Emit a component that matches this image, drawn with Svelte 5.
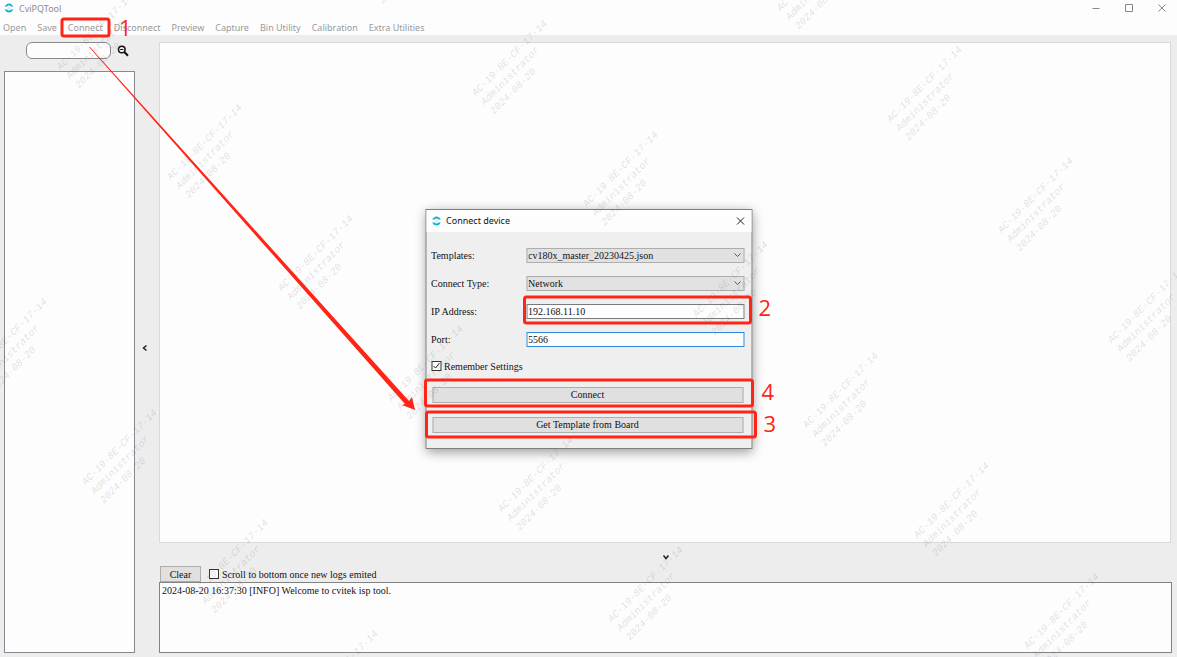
<script>
  const menu = ['Open', 'Save', 'Connect', 'Disconnect', 'Preview', 'Capture', 'Bin Utility', 'Calibration', 'Extra Utilities'];

  // Start points of the repeated security stamps, along four diagonals.
  const stamps = [
    [-26, 373], [84, 484], [195, 594], [305, 705],
    [59, 69], [169, 179], [280, 290], [390, 400], [500, 511], [610, 621],
    [363, -16], [474, 95], [585, 206], [695, 316], [805, 427], [916, 537], [1026, 648],
    [779, 10], [889, 121], [1000, 232], [1110, 342]
  ];

  let keyword = $state('');
  let template = $state('cv180x_master_20230425.json');
  let connectType = $state('Network');
  let ip = $state('192.168.11.10');
  let port = $state('5566');
  let remember = $state(true);
  let autoScroll = $state(false);
  let log = $state('2024-08-20 16:37:30 [INFO] Welcome to cvitek isp tool.');
</script>

{#snippet logo()}
  <svg class="logo" viewBox="0 0 20 20" aria-hidden="true">
    <path d="M1.500 7.500C3 3.500 6 1 10 1S17 3.500 18.500 7.500L14 7C12.800 5.500 11.500 4.800 10 4.800S7.200 5.500 6 7Z" fill="#16b4cc" />
    <path d="M1.500 12.500C3 16.500 6 19 10 19S17 16.500 18.500 12.500L14 13C12.800 14.500 11.500 15.200 10 15.200S7.200 14.500 6 13Z" fill="#16b4cc" />
    <path d="M7 9H13V11H7Z" fill="#a5e6ea" />
  </svg>
{/snippet}

<div class="app">
  <header class="titlebar">
    {@render logo()}
    <span class="title">CviPQTool</span>
    <div class="controls">
      <button aria-label="Minimize"><svg viewBox="0 0 10 10"><path d="M1.500 5.500H8.500" /></svg></button>
      <button aria-label="Maximize"><svg viewBox="0 0 10 10"><path d="M1.500 1.500H8.500V8.500H1.500Z" /></svg></button>
      <button aria-label="Close"><svg viewBox="0 0 10 10"><path d="M1.500 1.500L8.500 8.500M8.500 1.500L1.500 8.500" /></svg></button>
    </div>
  </header>

  <nav class="menubar">
    {#each menu as item}
      <button>{item}</button>
    {/each}
  </nav>

  <main class="workspace">
    <aside class="sidebar">
      <div class="search">
        <input type="text" aria-label="Search" bind:value={keyword} />
        <button aria-label="Find">
          <svg viewBox="0 0 12 12"><circle cx="4.800" cy="4.500" r="3.300" /><path d="M3.200 4.500H6.400" stroke-width="1" /><path d="M7.300 7L11 10.700" stroke-width="2" /></svg>
        </button>
      </div>
      <div class="tree"></div>
    </aside>

    <button class="collapse side" aria-label="Collapse side panel">
      <svg viewBox="0 0 8 8"><path d="M5.500 1.500L2.500 4L5.500 6.500" /></svg>
    </button>

    <section class="content">
      <div class="canvas"></div>
      <button class="collapse down" aria-label="Collapse log panel">
        <svg viewBox="0 0 8 8"><path d="M1.500 2.500L4 5.500L6.500 2.500" /></svg>
      </button>
      <div class="logbar">
        <button class="push" onclick={() => (log = '')}>Clear</button>
        <label class="check">
          <input type="checkbox" bind:checked={autoScroll} />
          <span>Scroll to bottom once new logs emited</span>
        </label>
      </div>
      <textarea class="log" aria-label="Log" readonly value={log}></textarea>
    </section>
  </main>

  <div class="dialog" role="dialog" aria-labelledby="dialog-title">
    <div class="dialog-head">
      {@render logo()}
      <span id="dialog-title">Connect device</span>
      <button aria-label="Close dialog"><svg viewBox="0 0 10 10"><path d="M1.500 1.500L8.500 8.500M8.500 1.500L1.500 8.500" /></svg></button>
    </div>
    <form class="dialog-body" onsubmit={(e) => e.preventDefault()}>
      <div class="fields">
        <label for="template">Templates:</label>
        <select id="template" bind:value={template}><option>cv180x_master_20230425.json</option></select>
        <label for="type">Connect Type:</label>
        <select id="type" bind:value={connectType}><option>Network</option></select>
        <label for="ip">IP Address:</label>
        <input id="ip" type="text" bind:value={ip} />
        <label for="port">Port:</label>
        <input id="port" class="active" type="text" bind:value={port} />
      </div>
      <label class="check">
        <input type="checkbox" bind:checked={remember} />
        <span>Remember Settings</span>
      </label>
      <div class="actions">
        <button class="push" type="submit">Connect</button>
        <button class="push" type="button">Get Template from Board</button>
      </div>
    </form>

    <svg class="marks" aria-hidden="true">
      <rect x="98" y="87" width="226" height="26" rx="2" />
      <rect x="-1" y="170" width="327" height="26" rx="2" />
      <rect x="0" y="202" width="329" height="25" rx="2" />
      <text x="332" y="106">2</text>
      <text x="335" y="190">4</text>
      <text x="337" y="222">3</text>
    </svg>
  </div>

  <svg class="overlay stamps" aria-hidden="true">
    {#each stamps as [x, y]}
      <g transform="translate({x} {y}) rotate(-45)">
        <text x="0" y="2">AC-19-8E-CF-17-14</text>
        <text x="0" y="15">Administrator</text>
        <text x="0" y="28">2024-08-20</text>
      </g>
    {/each}
  </svg>

  <svg class="overlay marks" aria-hidden="true">
    <rect x="62" y="19" width="47" height="17" rx="2" />
    <text x="119" y="36">1</text>
    <path class="arrow" d="M89 47L90 47L409 401L412 397L415 410L402 405L405 404Z" />
  </svg>
</div>

<style>
  :global(body) {
    margin: 0;
  }

  .app {
    position: relative;
    display: flex;
    flex-direction: column;
    height: 100vh;
    overflow: hidden;
    background: #fefdfe;
    color: #111;
    font-family: "Liberation Serif", serif;
    font-size: 10px;
    line-height: 13px;
  }

  button, input, select, textarea {
    box-sizing: border-box;
    margin: 0;
    padding: 0;
    border: 0;
    border-radius: 0;
    background: none;
    color: inherit;
    font: inherit;
    outline: none;
  }

  svg {
    display: block;
  }

  .logo {
    width: 10px;
    height: 10px;
  }

  .titlebar {
    display: flex;
    align-items: center;
    height: 16px;
    padding: 0 10px 0 4px;
    gap: 5px;
    color: #8c8c8c;
    font-family: "Noto Sans", sans-serif;
    font-size: 9px;
  }

  .controls {
    display: flex;
    gap: 23px;
    margin-left: auto;
  }

  .controls svg, .dialog-head button svg {
    width: 10px;
    height: 10px;
    fill: none;
    stroke: #888;
  }

  .menubar {
    display: flex;
    align-items: center;
    height: 16px;
    padding: 3px 3px 0;
    gap: 11px;
    color: #999;
    font-family: "Noto Sans", sans-serif;
    font-size: 9px;
  }

  .workspace {
    display: flex;
    flex: 1;
    min-height: 0;
    padding: 7px 5px 4px 4px;
    background: #eeedee;
  }

  .sidebar {
    display: flex;
    flex-direction: column;
    width: 131px;
    gap: 12px;
  }

  .search {
    display: flex;
    align-items: center;
    gap: 6px;
    padding-left: 22px;
  }

  .search input {
    width: 85px;
    height: 17px;
    padding: 0 5px;
    border: 1px solid #8a8a8a;
    border-radius: 6px;
    background: #fefdfe;
  }

  .search svg {
    width: 12px;
    height: 12px;
    fill: none;
    stroke: #111;
    stroke-width: 1.500;
  }

  .tree {
    flex: 1;
    border: 1px solid #868990;
    background: #fefdfe;
  }

  .collapse {
    display: flex;
    align-items: center;
    justify-content: center;
  }

  .collapse svg {
    width: 8px;
    height: 8px;
    fill: none;
    stroke: #222;
    stroke-width: 1.500;
  }

  .side {
    width: 24px;
    padding-right: 4px;
  }

  .content {
    display: flex;
    flex: 1;
    flex-direction: column;
    min-width: 0;
  }

  .canvas {
    flex: 1;
    margin-right: 1px;
    border: 1px solid #d9d9d9;
    background: #fefdfe;
  }

  .down {
    height: 23px;
    padding-top: 4px;
  }

  .logbar {
    display: flex;
    align-items: center;
    gap: 8px;
    padding-left: 1px;
  }

  .push {
    height: 16px;
    border: 1px solid #adadad;
    background: #e0e0e0;
    text-align: center;
  }

  .logbar .push {
    width: 41px;
  }

  .log {
    height: 71px;
    padding: 1px 2px;
    border: 1px solid #828282;
    background: #fefdfe;
    resize: none;
  }

  .check {
    display: flex;
    align-items: center;
    gap: 3px;
  }

  .check input {
    width: 10px;
    height: 10px;
    border: 1px solid #333;
    background: #fefdfe;
    appearance: none;
  }

  .check input:checked {
    background: #fefdfe url("data:image/svg+xml,%3Csvg xmlns='http://www.w3.org/2000/svg' viewBox='0 0 8 8'%3E%3Cpath d='M1 4l2 2 4-5' fill='none' stroke='%23222'/%3E%3C/svg%3E") center / 8px 8px no-repeat;
  }

  .dialog {
    position: absolute;
    top: 50%;
    left: 50%;
    box-sizing: border-box;
    width: 327px;
    border: 1px solid #7c7e80;
    background: #f0eff0;
    box-shadow: 0 3px 11px rgba(0, 0, 0, 0.4);
    transform: translate(-50%, -50%);
  }

  .dialog-head {
    display: flex;
    align-items: center;
    height: 22px;
    padding: 0 6px 0 5px;
    gap: 5px;
    background: #fefdfe;
    font-family: "Noto Sans", sans-serif;
    font-size: 9px;
  }

  .dialog-head button {
    margin-left: auto;
  }

  .dialog-head button svg {
    stroke: #222;
  }

  .dialog-body {
    display: flex;
    flex-direction: column;
    padding: 16px 7px 15px 5px;
  }

  .fields {
    display: grid;
    grid-template-columns: 95px 1fr;
    grid-auto-rows: 15px;
    align-items: center;
    row-gap: 13px;
  }

  .fields input, .fields select {
    width: 100%;
    height: 15px;
    padding: 0 1px;
    border: 1px solid #7a7a7a;
    background: #fefdfe;
  }

  .fields select {
    padding-right: 14px;
    border-color: #adadad;
    background: #e1e1e1 url("data:image/svg+xml,%3Csvg xmlns='http://www.w3.org/2000/svg' viewBox='0 0 8 8'%3E%3Cpath d='M1 2.500l3 3 3-3' fill='none' stroke='%23555'/%3E%3C/svg%3E") right 2px center / 8px 8px no-repeat;
    appearance: none;
  }

  .fields .active {
    border-color: #2b88d8;
  }

  .dialog-body .check {
    margin-top: 13px;
  }

  .actions {
    display: flex;
    flex-direction: column;
    gap: 14px;
    margin-top: 14px;
    padding: 0 1px;
  }

  .overlay {
    position: absolute;
    inset: 0;
    width: 100%;
    height: 100%;
    pointer-events: none;
  }

  .stamps text {
    fill: rgba(95, 100, 95, 0.2);
    font-family: "Liberation Mono", monospace;
    font-size: 10px;
    font-style: italic;
  }

  .marks rect {
    fill: none;
    stroke: #ff2416;
    stroke-width: 3;
  }

  .marks text {
    fill: #ff2416;
    font-family: "Open Sans", sans-serif;
    font-size: 22px;
  }

  .marks .arrow {
    fill: #ff2416;
  }

  .dialog .marks {
    position: absolute;
    top: 0;
    left: 0;
    width: 100%;
    height: 100%;
    overflow: visible;
    pointer-events: none;
  }
</style>
